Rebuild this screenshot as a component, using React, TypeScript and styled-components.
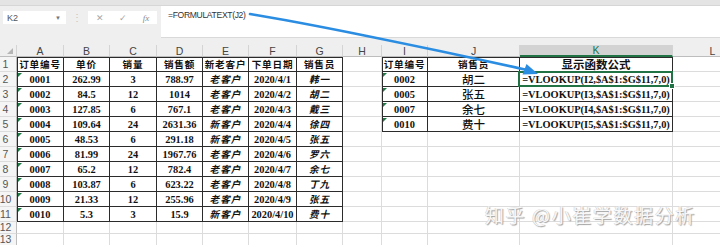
import React from 'react';
import styled, { createGlobalStyle, css } from 'styled-components';

const GlobalStyle = createGlobalStyle`
  html, body {
    margin: 0;
    padding: 0;
    width: 720px;
    height: 245px;
    overflow: hidden;
    background: #ffffff;
    font-family: "Liberation Sans", Arial, sans-serif;
  }
`;

const Page = styled.div`
  position: relative;
  width: 720px;
  height: 245px;
  overflow: hidden;
`;

const Toolbar = styled.div`
  display: flex;
  flex-direction: column;
  height: 45px;
  background: #efefef;
`;

const TopStrip = styled.div`
  height: 5px;
  background: #e4e4e4;
  border-bottom: 1px solid #d6d6d6;
`;

const Bar = styled.div`
  display: flex;
  align-items: flex-start;
  height: 32px;
`;

const NameBox = styled.div`
  display: flex;
  align-items: center;
  justify-content: space-between;
  box-sizing: border-box;
  margin: 5px 0 0 3px;
  width: 63px;
  height: 13px;
  padding: 0 5px 0 4px;
  background: #ffffff;
  font-size: 9px;
  color: #555;
`;

const Caret = styled.span`
  font-size: 6px;
  color: #777;
`;

const Separator = styled.div`
  width: 22px;
  margin-top: 5px;
  text-align: center;
  font-size: 10px;
  line-height: 13px;
  color: #c4c4c4;
`;

const FxBox = styled.div`
  display: flex;
  align-items: center;
  justify-content: space-around;
  margin-top: 5px;
  width: 69px;
  height: 13px;
  background: #ffffff;
  color: #a8a8a8;
  font-size: 9px;
`;

const FxLabel = styled.span`
  font-family: "Liberation Serif", serif;
  font-style: italic;
  font-size: 9px;
  color: #8a8a8a;
`;

const FormulaBox = styled.div`
  flex: 1;
  box-sizing: border-box;
  height: 32px;
  margin-left: 4px;
  padding: 4px 0 0 7px;
  background: #ffffff;
  border-bottom: 1px solid #d9d9d9;
  font-size: 8.6px;
  letter-spacing: -0.35px;
  color: #333;
`;

const Sheet = styled.div`
  display: grid;
  grid-template-columns: 17px 47px 46px 47px 46px 46px 48px 46px 39px 46px 92px 153px 80px;
  grid-template-rows: 12px repeat(11, 15px) repeat(2, 12px);
`;

const Corner = styled.div`
  display: flex;
  align-items: flex-end;
  justify-content: flex-end;
  box-sizing: border-box;
  padding: 0 3px 2px 0;
  background: #efefef;
  border-right: 1px solid #d4d4d4;
  border-bottom: 1px solid #bdbdbd;
`;

const ColHead = styled.div<{ $active?: boolean }>`
  display: flex;
  align-items: center;
  justify-content: center;
  box-sizing: border-box;
  background: ${({ $active }) => ($active ? '#d3d3d3' : '#efefef')};
  border-right: 1px solid #d4d4d4;
  border-bottom: ${({ $active }) => ($active ? '2px solid #217346' : '1px solid #bdbdbd')};
  font-size: 10.5px;
  color: ${({ $active }) => ($active ? '#217346' : '#444')};
`;

const RowHead = styled.div`
  display: flex;
  align-items: center;
  justify-content: center;
  box-sizing: border-box;
  padding-right: 5px;
  background: #f5f5f5;
  border-right: 1px solid #bdbdbd;
  border-bottom: 1px solid #dcdcdc;
  font-size: 10.5px;
  line-height: 1;
  color: #555;
`;

type Font = 'num' | 'head' | 'cn' | 'name' | 'title' | 'none';

const fonts = {
  num: css`
    font-family: "Liberation Serif", "Times New Roman", serif;
    font-weight: 700;
    font-size: 10.4px;
  `,
  head: css`
    font-family: "Noto Sans CJK SC", sans-serif;
    font-weight: 700;
    font-size: 9.6px;
    letter-spacing: 0.8px;
  `,
  cn: css`
    font-family: "Noto Sans CJK SC", sans-serif;
    font-weight: 700;
    font-style: italic;
    font-size: 9.6px;
    letter-spacing: 1px;
  `,
  name: css`
    font-family: "Noto Sans CJK SC", sans-serif;
    font-weight: 500;
    font-size: 11.5px;
  `,
  title: css`
    font-family: "Noto Sans CJK SC", sans-serif;
    font-weight: 700;
    font-size: 11.5px;
  `,
  none: css``,
};

const Cell = styled.div<{
  $table?: boolean;
  $left?: boolean;
  $top?: boolean;
  $flag?: boolean;
  $selected?: boolean;
  $font?: Font;
}>`
  position: relative;
  display: flex;
  align-items: center;
  justify-content: center;
  box-sizing: border-box;
  white-space: nowrap;
  color: #111;
  border-right: 1px solid ${({ $table }) => ($table ? '#2b2b2b' : '#dcdcdc')};
  border-bottom: 1px solid ${({ $table }) => ($table ? '#2b2b2b' : '#dcdcdc')};
  box-shadow: ${({ $left, $top }) =>
    [$left ? 'inset 1px 0 0 #2b2b2b' : '', $top ? 'inset 0 1px 0 #2b2b2b' : '']
      .filter(Boolean)
      .join(', ') || 'none'};
  ${({ $font = 'none' }) => fonts[$font]}

  ${({ $flag }) =>
    $flag &&
    css`
      &::before {
        content: '';
        position: absolute;
        top: 1px;
        left: 1px;
        border-top: 4px solid #1d7a45;
        border-right: 4px solid transparent;
      }
    `}

  ${({ $selected }) =>
    $selected &&
    css`
      &::after {
        content: '';
        position: absolute;
        inset: -1px -1px -1px -2px;
        border: 2px solid #217346;
      }
    `}
`;

const Handle = styled.span`
  position: absolute;
  right: -3px;
  bottom: -3px;
  width: 4px;
  height: 4px;
  background: #217346;
  border: 1px solid #ffffff;
  z-index: 2;
`;

const Overlay = styled.svg`
  position: absolute;
  top: 0;
  left: 0;
  pointer-events: none;
`;

const Watermark = styled.div`
  position: absolute;
  left: 485px;
  top: 201px;
  font-family: "Noto Sans CJK SC", sans-serif;
  font-size: 19px;
  color: #f7f7f7;
  text-shadow: 1px 1px 1px #a0a0a0, -0.5px -0.5px 0 #d0d0d0;
  letter-spacing: 1.6px;
  white-space: nowrap;
`;

const columns = ['A', 'B', 'C', 'D', 'E', 'F', 'G', 'H', 'I', 'J', 'K', 'L'];

const leftHeader = ['订单编号', '单价', '销量', '销售额', '新老客户', '下单日期', '销售员'];

const orders = [
  ['0001', '262.99', '3', '788.97', '老客户', '2020/4/1', '韩一'],
  ['0002', '84.5', '12', '1014', '老客户', '2020/4/2', '胡二'],
  ['0003', '127.85', '6', '767.1', '老客户', '2020/4/3', '戴三'],
  ['0004', '109.64', '24', '2631.36', '新客户', '2020/4/4', '徐四'],
  ['0005', '48.53', '6', '291.18', '新客户', '2020/4/5', '张五'],
  ['0006', '81.99', '24', '1967.76', '老客户', '2020/4/6', '罗六'],
  ['0007', '65.2', '12', '782.4', '老客户', '2020/4/7', '余七'],
  ['0008', '103.87', '6', '623.22', '老客户', '2020/4/8', '丁九'],
  ['0009', '21.33', '12', '255.96', '老客户', '2020/4/9', '张五'],
  ['0010', '5.3', '3', '15.9', '新客户', '2020/4/10', '费十'],
];

const lookups = [
  ['0002', '胡二'],
  ['0005', '张五'],
  ['0007', '余七'],
  ['0010', '费十'],
];

const leftFont = (col: number): Font => (col === 4 || col === 6 ? 'cn' : 'num');

const renderRow = (r: number) => {
  const cells: React.ReactNode[] = [];
  const order = r >= 2 && r <= 11 ? orders[r - 2] : null;

  // A..G
  for (let c = 0; c < 7; c++) {
    if (r === 1) {
      cells.push(
        <Cell key={`l${c}`} $table $top $left={c === 0} $font="head">
          {leftHeader[c]}
        </Cell>
      );
    } else if (order) {
      cells.push(
        <Cell key={`l${c}`} $table $left={c === 0} $flag={c === 0} $font={leftFont(c)}>
          {order[c]}
        </Cell>
      );
    } else {
      cells.push(<Cell key={`l${c}`} />);
    }
  }

  // H
  cells.push(<Cell key="h" />);

  // I..K
  if (r === 1) {
    cells.push(
      <Cell key="i" $table $top $left $font="head">订单编号</Cell>,
      <Cell key="j" $table $top $font="head">销售员</Cell>,
      <Cell key="k" $table $top $font="title">显示函数公式</Cell>
    );
  } else if (r >= 2 && r <= 5) {
    const [id, name] = lookups[r - 2];
    cells.push(
      <Cell key="i" $table $left $flag $font="num">{id}</Cell>,
      <Cell key="j" $table $font="name">{name}</Cell>,
      <Cell key="k" $table $font="num" $selected={r === 2}>
        {`=VLOOKUP(I${r},$A$1:$G$11,7,0)`}
        {r === 2 && <Handle />}
      </Cell>
    );
  } else {
    cells.push(<Cell key="i" />, <Cell key="j" />, <Cell key="k" />);
  }

  cells.push(<Cell key="l" />);
  return cells;
};

const App: React.FC = () => {
  const rows = Array.from({ length: 13 }, (_, i) => i + 1);

  return (
    <Page>
      <GlobalStyle />
      <Toolbar>
        <TopStrip />
        <Bar>
          <NameBox>
            <span>K2</span>
            <Caret>▼</Caret>
          </NameBox>
          <Separator>⋮</Separator>
          <FxBox>
            <span>✕</span>
            <span>✓</span>
            <FxLabel>fx</FxLabel>
          </FxBox>
          <FormulaBox>=FORMULATEXT(J2)</FormulaBox>
        </Bar>
      </Toolbar>

      <Sheet>
        <Corner>
          <svg width="6" height="6" viewBox="0 0 6 6">
            <polygon points="6,0 6,6 0,6" fill="#b5b5b5" />
          </svg>
        </Corner>
        {columns.map((c) => (
          <ColHead key={c} $active={c === 'K'}>
            {c}
          </ColHead>
        ))}
        {rows.map((r) => (
          <React.Fragment key={r}>
            <RowHead>{r}</RowHead>
            {renderRow(r)}
          </React.Fragment>
        ))}
      </Sheet>

      <Overlay width="720" height="245" viewBox="0 0 720 245">
        <path
          d="M250 14 C 300 22, 420 46, 525 69.5"
          fill="none"
          stroke="#2b8de2"
          strokeWidth="2.6"
          strokeLinecap="round"
        />
        <polygon points="538,74 526.5,64 522.5,74.5" fill="#2b8de2" />
      </Overlay>

      <Watermark>知乎 @小崔学数据分析</Watermark>
    </Page>
  );
};

export default App;
